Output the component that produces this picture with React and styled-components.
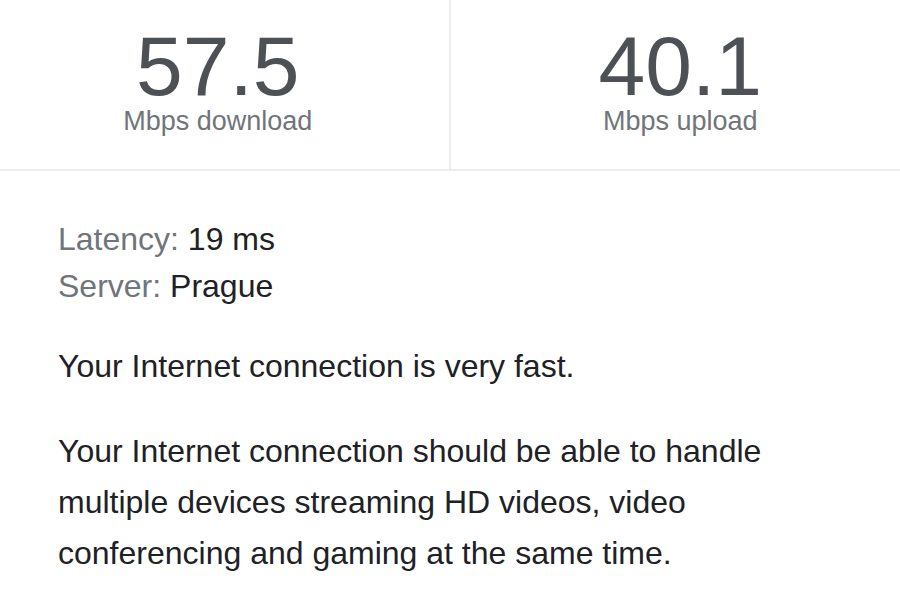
import styled, { createGlobalStyle } from "styled-components";

const GlobalStyle = createGlobalStyle`
  html, body {
    margin: 0;
    padding: 0;
    background: #fff;
    overflow: hidden;
  }
  body {
    font-family: "Liberation Sans", Arial, Helvetica, sans-serif;
    color: #202124;
  }
`;

const stats = [
  { value: "57.5", label: "Mbps download" },
  { value: "40.1", label: "Mbps upload" },
];

const details = [
  { name: "Latency:", value: "19 ms" },
  { name: "Server:", value: "Prague" },
];

export default function App() {
  return (
    <>
      <GlobalStyle />
      <Page>
        <StatsRow>
          {stats.map((s) => (
            <StatCol key={s.label}>
              <StatValue>{s.value}</StatValue>
              <StatLabel>{s.label}</StatLabel>
            </StatCol>
          ))}
        </StatsRow>

        <Body>
          <Details>
            {details.map((d) => (
              <DetailLine key={d.name}>
                <DetailName>{d.name}</DetailName> {d.value}
              </DetailLine>
            ))}
          </Details>
          <Text>Your Internet connection is very fast.</Text>
          <Text>
            Your Internet connection should be able to handle multiple devices
            streaming HD videos, video conferencing and gaming at the same time.
          </Text>
        </Body>
      </Page>
    </>
  );
}

const Page = styled.main`
  width: 900px;
  min-height: 600px;
`;

const StatsRow = styled.section`
  display: grid;
  grid-template-columns: 1fr 1fr;
  margin: 0 -10px 0 -13px;
  border-bottom: 2px solid #ececec;
`;

const StatCol = styled.div`
  display: flex;
  flex-direction: column;
  align-items: center;
  height: 169px;
  padding-top: 25px;
  box-sizing: border-box;

  & + & {
    border-left: 2px solid #ececec;
  }
`;

const StatValue = styled.div`
  font-size: 84px;
  line-height: 82px;
  color: #4d5156;
`;

const StatLabel = styled.div`
  margin-top: 1px;
  font-size: 27px;
  line-height: 27px;
  color: #70757a;
`;

const Body = styled.section`
  padding: 45px 0 0 58px;
  max-width: 760px;
`;

const Details = styled.div`
  margin-bottom: 31px;
`;

const DetailLine = styled.div`
  font-size: 32px;
  line-height: 47px;
  color: #202124;
`;

const DetailName = styled.span`
  color: #70757a;
`;

const Text = styled.p`
  margin: 0 0 34px;
  font-size: 32px;
  line-height: 51px;
  color: #202124;
`;
